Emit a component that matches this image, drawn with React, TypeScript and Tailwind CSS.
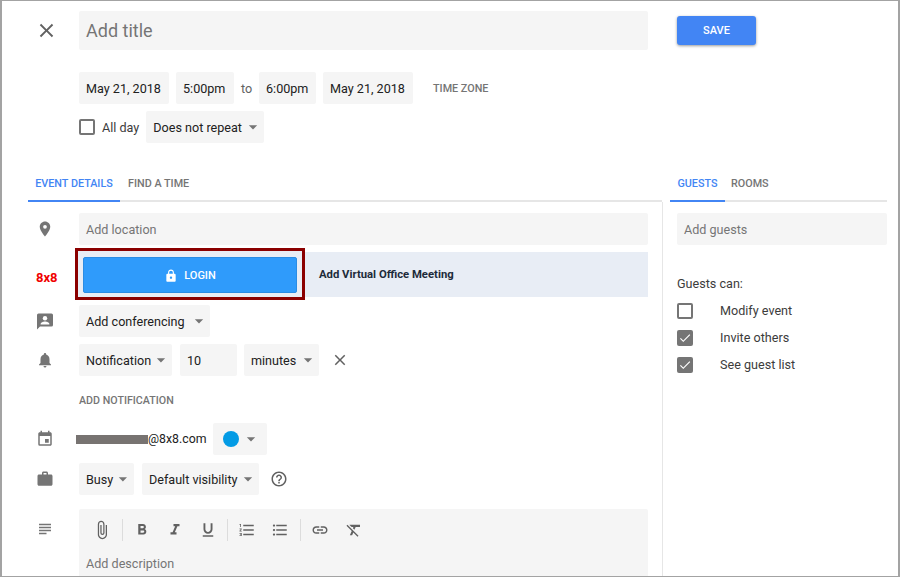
import React from "react";
import {
  MdClose,
  MdPlace,
  MdNotifications,
  MdWork,
  MdEvent,
  MdSubject,
  MdAttachFile,
  MdFormatBold,
  MdFormatItalic,
  MdFormatUnderlined,
  MdFormatListNumbered,
  MdFormatListBulleted,
  MdLink,
  MdFormatClear,
  MdHelpOutline,
  MdLock,
  MdArrowDropDown,
  MdCheck,
} from "react-icons/md";

function Field({ children, className = "" }: { children: React.ReactNode; className?: string }) {
  return <div className={`h-8 bg-[#f5f5f5] rounded-[2px] flex items-center px-[7px] text-[12.6px] whitespace-nowrap text-[#212121] ${className}`}>{children}</div>;
}

function Select({ label, className = "" }: { label: string; className?: string }) {
  return (
    <Field className={`justify-between ${className}`}>
      <span className="pt-[2px]">{label}</span>
      <MdArrowDropDown className="text-[#757575] text-[20px] mr-[-6px]" />
    </Field>
  );
}

function Row({ icon, children, className = "" }: { icon?: React.ReactNode; children: React.ReactNode; className?: string }) {
  return (
    <div className={`flex items-center ${className}`}>
      <div className="w-[51px] shrink-0 flex justify-center pr-[19px] pl-[2px] text-[#757575]">{icon}</div>
      <div className="flex items-center flex-1 min-w-0">{children}</div>
    </div>
  );
}

function GuestCheck({ label, checked }: { label: string; checked?: boolean }) {
  return (
    <div className="h-[27px] flex items-center text-[12.6px] text-[#3c3c3c]">
      {checked ? (
        <div className="w-4 h-4 rounded-[2px] bg-[#757575] flex items-center justify-center">
          <MdCheck className="text-white text-[14px]" />
        </div>
      ) : (
        <div className="w-4 h-4 rounded-[2px] border-2 border-[#757575]" />
      )}
      <span className="ml-[27px]">{label}</span>
    </div>
  );
}

function Sep() {
  return <div className="w-px h-[22px] bg-[#dcdcdc]" />;
}

function ConferenceIcon() {
  return (
    <svg width="18" height="18" viewBox="0 0 18 18" fill="currentColor">
      <path d="M2.5 1.5h13A1.5 1.5 0 0 1 17 3v10a1.5 1.5 0 0 1-1.5 1.5H4L1 17.5V3a1.5 1.5 0 0 1 1.5-1.5z" fillRule="evenodd" />
      <circle cx="9" cy="6.2" r="2.2" fill="#fff" />
      <path d="M4.6 12.2c0-1.8 2.9-2.6 4.4-2.6s4.4.8 4.4 2.6v.4H4.6z" fill="#fff" />
    </svg>
  );
}

export default function App() {
  return (
    <div className="w-[900px] h-[577px] overflow-hidden bg-white border-t border-l-2 border-r-2 border-b border-[#a3a3a3] font-['Roboto',sans-serif] text-[#212121]">
      <div className="flex items-start pt-[10px]">
        <div className="w-[77px] h-[39px] shrink-0 flex items-center justify-center pl-[11px] text-[#616161]">
          <MdClose className="text-[23px]" />
        </div>
        <div className="w-[569px] h-[39px] bg-[#f5f5f5] rounded-[2px] flex items-center px-[7px] text-[18px] text-[#757575]">Add title</div>
        <button className="ml-[29px] mt-[5px] w-[79px] h-[29px] pt-[2px] bg-[#4285f4] rounded-[3px] shadow-[0_1px_3px_rgba(0,0,0,0.4)] text-white text-[11px] font-medium">SAVE</button>
      </div>

      <div className="pl-[77px] mt-[22px] flex items-center">
        <Field className="w-[90px] pt-[2px]">May 21, 2018</Field>
        <Field className="w-[58px] ml-[7px] pt-[2px]">5:00pm</Field>
        <span className="w-[25px] pt-[2px] text-center text-[12.6px] text-[#616161]">to</span>
        <Field className="w-[57px] pt-[2px]">6:00pm</Field>
        <Field className="w-[90px] ml-[7px] pt-[2px]">May 21, 2018</Field>
        <span className="ml-[20px] pt-[2px] text-[10.8px] font-medium text-[#757575]">TIME ZONE</span>
      </div>

      <div className="pl-[77px] mt-[7px] flex items-center">
        <div className="w-4 h-4 rounded-[2px] border-2 border-[#757575]" />
        <span className="ml-[7px] pt-[2px] text-[12.6px] text-[#3c3c3c]">All day</span>
        <Select label="Does not repeat" className="w-[118px] ml-[7px]" />
      </div>

      <div className="flex mt-[29px]">
        <div className="w-[634px] ml-[26px] shrink-0">
          <div className="h-[30px] border-b-2 border-[#e6e6e6] flex text-[10.8px] font-medium">
            <div className="w-[92px] h-[30px] border-b-2 border-[#4285f4] text-center pt-[4px] text-[#4285f4]">EVENT DETAILS</div>
            <div className="ml-[8px] pt-[4px] text-[#757575]">FIND A TIME</div>
          </div>
          <div className="mt-[11px]">
            <Row icon={<MdPlace className="text-[18px]" />}>
              <Field className="w-[569px] pt-[2px] text-[#757575]">Add location</Field>
            </Row>
          </div>
          <div className="mt-[3px] flex items-center">
            <div className="w-[47px] shrink-0 pl-[8px] pt-[8px] text-[13px] font-bold text-[#f00000]">8x8</div>
            <div className="w-[230px] h-[52px] pt-[2px] border-[3px] border-[#8b0000] bg-[#e8edf5] flex items-center justify-center relative z-10">
              <div className="w-[214px] h-[36px] pt-[2px] bg-[#2f9bfb] border border-[#2a8ce4] rounded-[2px] text-white flex items-center justify-center text-[11px] font-medium">
                <MdLock className="text-[14px] mr-[6px]" />
                LOGIN
              </div>
            </div>
            <div className="w-[343px] h-[45px] pt-[3px] bg-[#e8edf5] flex items-center pl-[14px] text-[11.3px] font-bold text-[#1d2b3a]">Add Virtual Office Meeting</div>
          </div>
          <div className="mt-[5px]">
            <Row icon={<ConferenceIcon />}>
              <Select label="Add conferencing" className="w-[131px]" />
            </Row>
          </div>
          <div className="mt-[7px]">
            <Row icon={<MdNotifications className="text-[18px]" />}>
              <Select label="Notification" className="w-[93px]" />
              <Field className="w-[57px] ml-[8px] pt-[2px]">10</Field>
              <Select label="minutes" className="w-[75px] ml-[7px]" />
              <MdClose className="ml-[12px] text-[18px] text-[#616161]" />
            </Row>
          </div>
          <div className="ml-[51px] mt-[18px] h-[13px] leading-[13px] text-[10.7px] font-medium text-[#757575]">ADD NOTIFICATION</div>
          <div className="mt-[16px]">
            <Row icon={<MdEvent className="text-[18px]" />}>
              <div className="ml-[-3px] w-[72px] h-[9px] bg-[#777371]" />
              <span className="pt-[1px] text-[12.3px]">@8x8.com</span>
              <div className="ml-[7px] w-[54px] h-8 bg-[#f5f5f5] rounded-[2px] flex items-center pl-[10px]">
                <div className="w-4 h-4 rounded-full bg-[#039be5]" />
                <MdArrowDropDown className="text-[#757575] text-[20px] ml-[2px]" />
              </div>
            </Row>
          </div>
          <div className="mt-[8px]">
            <Row icon={<MdWork className="text-[18px]" />}>
              <Select label="Busy" className="w-[55px]" />
              <Select label="Default visibility" className="w-[117px] ml-[8px]" />
              <MdHelpOutline className="ml-[11px] text-[18px] text-[#616161]" />
            </Row>
          </div>
          <div className="mt-[14px] flex items-start">
            <div className="w-[51px] shrink-0 flex justify-center pr-[19px] pl-[2px] pt-[11px] text-[#757575]">
              <MdSubject className="text-[18px]" />
            </div>
            <div className="w-[569px] h-[70px] bg-[#f5f5f5] rounded-t-[2px] px-[7px]">
              <div className="h-[42px] flex items-center text-[#616161]">
                <MdAttachFile className="text-[20px] ml-[6px]" />
                <div className="ml-[10px]"><Sep /></div>
                <MdFormatBold className="text-[18px] ml-[10px]" />
                <MdFormatItalic className="text-[18px] ml-[15px]" />
                <MdFormatUnderlined className="text-[18px] ml-[15px]" />
                <div className="ml-[10px]"><Sep /></div>
                <MdFormatListNumbered className="text-[18px] ml-[10px]" />
                <MdFormatListBulleted className="text-[18px] ml-[15px]" />
                <div className="ml-[11px]"><Sep /></div>
                <MdLink className="text-[18px] ml-[10px]" />
                <MdFormatClear className="text-[18px] ml-[16px]" />
              </div>
              <div className="text-[12.6px] text-[#757575] mt-[4px]">Add description</div>
            </div>
          </div>
        </div>

        <div className="ml-[8px] w-[217px]">
          <div className="h-[30px] border-b-2 border-[#e6e6e6] flex text-[10.8px] font-medium">
            <div className="w-[55px] h-[30px] border-b-2 border-[#4285f4] text-center pt-[4px] text-[#4285f4]">GUESTS</div>
            <div className="ml-[6px] pt-[4px] text-[#757575]">ROOMS</div>
          </div>
          <div className="border-l border-[#e6e6e6] ml-[-8px] pl-[14px] h-[380px] pt-[11px]">
            <Field className="w-[210px] pt-[2px] text-[#757575]">Add guests</Field>
            <div className="mt-[30px] text-[12.6px] text-[#3c3c3c]">Guests can:</div>
            <div className="mt-[4px]">
              <GuestCheck label="Modify event" />
              <GuestCheck label="Invite others" checked />
              <GuestCheck label="See guest list" checked />
            </div>
          </div>
        </div>
      </div>
    </div>
  );
}
